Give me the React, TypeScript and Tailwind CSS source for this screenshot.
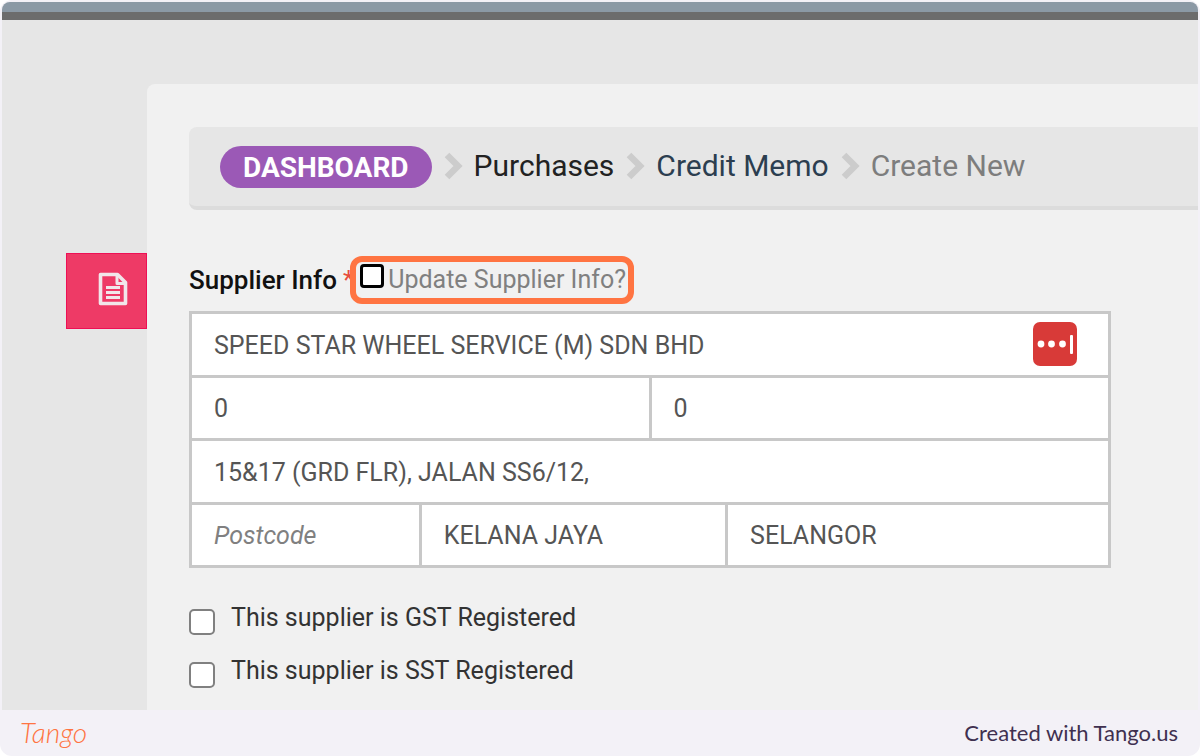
const fieldClass =
    "block h-full w-full bg-white px-[22px] pt-0.5 text-[25px] text-[#555555] outline-none placeholder:text-[#808080] placeholder:italic";

const checks = [
    { id: "gst", label: "This supplier is GST Registered" },
    { id: "sst", label: "This supplier is SST Registered" },
];

function Separator() {
    return (
        <svg viewBox="0 0 20 28" className="h-7 w-5 shrink-0" fill="none" stroke="#cccccc" strokeWidth="6.5" aria-hidden="true">
            <path d="M4 3 15 14 4 25" />
        </svg>
    );
}

function DocumentIcon() {
    return (
        <svg viewBox="0 0 30 34" className="h-[34px] w-[30px]" fill="none" stroke="#f1e6ea" strokeWidth="3.6" strokeLinejoin="round" aria-hidden="true">
            <path d="M2.5 2.5H19.5L27.5 10.5V31.5H2.5Z" />
            <path d="M19 3V11.5H27" strokeWidth="3" />
            <path d="M8 15.5H22M8 20.5H22M8 25.5H22" strokeWidth="2.8" />
        </svg>
    );
}

function PasswordIcon() {
    return (
        <svg viewBox="0 0 44 44" className="size-11" aria-hidden="true">
            <rect width="44" height="44" rx="7" fill="#d83a38" />
            <g fill="#ffffff">
                <circle cx="8" cy="22" r="3.4" />
                <circle cx="18.5" cy="22" r="3.4" />
                <circle cx="29.5" cy="22" r="3.4" />
                <rect x="37" y="13" width="3" height="19" rx="1" />
            </g>
        </svg>
    );
}

function Breadcrumb() {
    return (
        <nav
            aria-label="Breadcrumb"
            className="flex h-[83px] items-center gap-[11px] rounded-l-lg border-b-4 border-[#dcdcdc] bg-[#e6e6e6] pb-0.5 pl-[31px] text-[30px] whitespace-nowrap"
        >
            <a
                href="#dashboard"
                className="mt-0.5 flex h-[42px] items-center rounded-full bg-[#9b59b6] px-[23px] pt-0.5 text-[28px] font-bold text-white"
            >
                DASHBOARD
            </a>
            <Separator />
            <a href="#purchases" className="text-[#222222]">Purchases</a>
            <Separator />
            <a href="#credit-memo" className="text-[#2c3e50]">Credit Memo</a>
            <Separator />
            <span className="text-[#7d7d7d]">Create New</span>
        </nav>
    );
}

function SupplierFields() {
    return (
        <div className="mr-[87px] grid h-[257px] grid-cols-12 grid-rows-4 gap-[3px] border-[3px] border-[#c8c8c8] bg-[#c8c8c8]">
            <div className="col-span-12 flex items-center bg-white pr-[31px]">
                <input aria-label="Supplier name" className={fieldClass} defaultValue="SPEED STAR WHEEL SERVICE (M) SDN BHD" />
                <button type="button" aria-label="Fill from password manager" className="shrink-0">
                    <PasswordIcon />
                </button>
            </div>
            <div className="col-span-6">
                <input aria-label="Phone" className={fieldClass} defaultValue="0" />
            </div>
            <div className="col-span-6">
                <input aria-label="Fax" className={fieldClass} defaultValue="0" />
            </div>
            <div className="col-span-12">
                <input aria-label="Address" className={fieldClass} defaultValue="15&17 (GRD FLR), JALAN SS6/12," />
            </div>
            <div className="col-span-3">
                <input aria-label="Postcode" className={fieldClass} placeholder="Postcode" />
            </div>
            <div className="col-span-4">
                <input aria-label="City" className={fieldClass} defaultValue="KELANA JAYA" />
            </div>
            <div className="col-span-5">
                <input aria-label="State" className={fieldClass} defaultValue="SELANGOR" />
            </div>
        </div>
    );
}

export default function App() {
    return (
        <div className="flex min-h-screen flex-col overflow-hidden rounded-xl bg-[#f3f1f7] px-0.5 pt-0.5 font-['Roboto',sans-serif]">
            <div className="flex flex-1 flex-col overflow-hidden rounded-t-lg bg-[#e6e6e6]">
                <div className="h-[18px] border-b-8 border-[#6c6c6c] bg-[#8b99a5]" />

                <div className="flex flex-1 pt-16">
                    {/* side tab */}
                    <aside className="flex w-[145px] shrink-0 justify-end pt-[169px]">
                        <button
                            type="button"
                            aria-label="Document"
                            className="flex h-[76px] w-[81px] items-center justify-center border border-[#ee0f55] bg-[#ee3a66] pb-1 pl-3"
                        >
                            <DocumentIcon />
                        </button>
                    </aside>

                    <main className="min-w-0 flex-1 overflow-hidden rounded-tl-lg bg-[#f1f1f1] pt-[43px] pl-[42px]">
                        <Breadcrumb />

                        <div className="mt-[46px] mb-[7px] flex h-12 items-center text-[26px] whitespace-nowrap">
                            <h2 className="font-medium text-[#111111]">Supplier Info</h2>
                            <span className="ml-1.5 text-[#e74c3c]">*</span>
                            <label className="-ml-1 flex h-12 items-center rounded-xl border-[6px] border-[#ff7442] pr-0.5 pl-1 text-[25px] text-[#808080]">
                                <input
                                    type="checkbox"
                                    className="mr-1 mb-2 size-6 appearance-none rounded border-[3px] border-black bg-white"
                                />
                                Update Supplier Info?
                            </label>
                        </div>

                        <SupplierFields />

                        <div className="flex flex-col gap-[13px] pt-[30px] pb-[19px]">
                            {checks.map((check) => (
                                <div key={check.id} className="flex h-10 items-center gap-4">
                                    <input
                                        id={check.id}
                                        type="checkbox"
                                        className="mt-2 size-[26px] appearance-none rounded-[5px] border-2 border-[#808080] bg-white"
                                    />
                                    <label htmlFor={check.id} className="text-[25px] text-[#333333]">
                                        {check.label}
                                    </label>
                                </div>
                            ))}
                        </div>
                    </main>
                </div>
            </div>

            <footer className="flex h-[46px] shrink-0 items-center justify-between pr-5 pb-0.5 pl-[18px]">
                <a href="#tango" className="font-['Lato',sans-serif] text-[28px] font-light text-[#ff7442] italic">Tango</a>
                <span className="font-['Lato',sans-serif] text-[22px] text-[#3f3050]">Created with Tango.us</span>
            </footer>
        </div>
    );
}
